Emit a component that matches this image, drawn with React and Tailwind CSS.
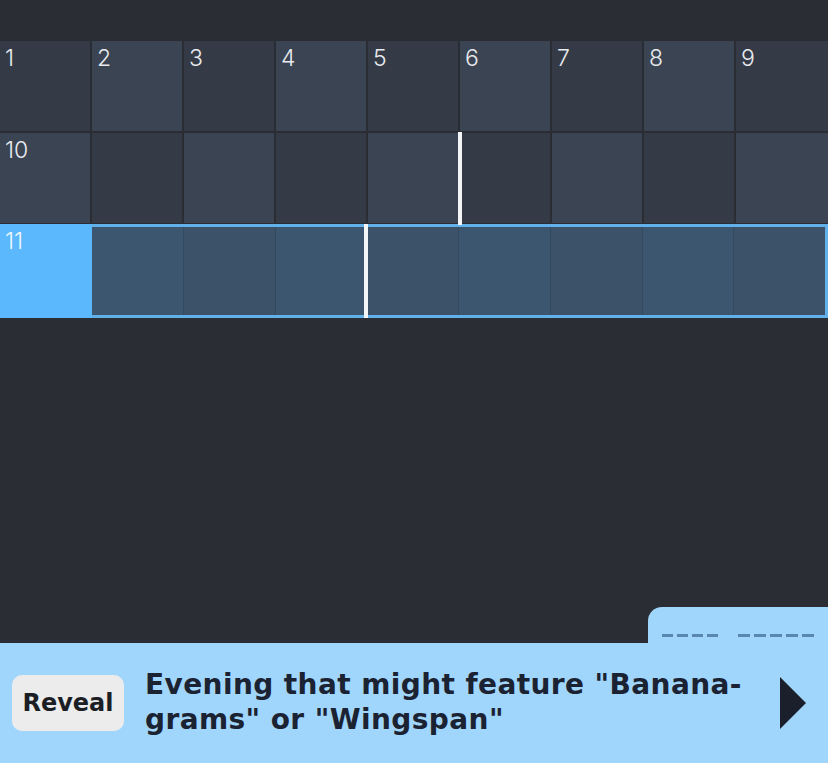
import React from 'react';

const dark = 'bg-[#343b47]';
const light = 'bg-[#3a4452]';

const Cell = ({ label, shade, cursor }) => (
  <div className={`relative h-[90px] ${shade}`}>
    {label && (
      <span className="absolute left-[5px] top-0 text-[23px] font-light text-[#e8eaee]">{label}</span>
    )}
    {cursor && <div className="absolute -left-[2px] -top-[1px] bottom-[-2px] w-[4px] bg-[#f4f5f7] z-10" />}
  </div>
);

const Dashes = ({ n, w }) => (
  <div className="flex gap-[4px]">
    {Array.from({ length: n }).map((_, i) => (
      <div key={i} className={`h-[3px] ${w} bg-[#5a87ad]`} />
    ))}
  </div>
);

export default function App() {
  const row1 = [1, 2, 3, 4, 5, 6, 7, 8, 9];
  return (
    <div className="h-screen w-full bg-[#2a2d33] flex flex-col overflow-hidden" style={{ fontFamily: 'Inter, "Noto Sans", sans-serif' }}>
      <div className="h-[41px]" />

      {/* row 1 */}
      <div className="grid grid-cols-[90px_90px_90px_90px_90px_90px_90px_90px_1fr] gap-x-[2px] mb-[2px]">
        {row1.map((n, i) => (
          <Cell key={n} label={n} shade={i % 2 === 0 ? dark : light} />
        ))}
      </div>

      {/* row 2 */}
      <div className="grid grid-cols-[90px_90px_90px_90px_90px_90px_90px_90px_1fr] gap-x-[2px]">
        {row1.map((n, i) => (
          <Cell key={n} label={i === 0 ? 10 : null} shade={i % 2 === 0 ? light : dark} cursor={i === 5} />
        ))}
      </div>

      {/* row 3 - active */}
      <div className="flex h-[94px] mt-[1px]">
        <div className="w-[92px] bg-[#5cb8fc] relative">
          <span className="absolute left-[5px] top-0 text-[23px] font-light text-[#eef6fe]">11</span>
        </div>
        <div className="flex-1 border-[3px] border-l-0 border-[#62b0ea] flex gap-x-[1px] bg-[#33495f]">
          {[0, 1, 2, 3, 4, 5, 6, 7].map((i) => (
            <div key={i} className={`relative flex-1 ${i % 2 === 0 ? 'bg-[#3c566f]' : 'bg-[#3b5269]'}`}>
              {i === 3 && <div className="absolute -left-[3px] -top-[3px] bottom-[-3px] w-[4px] bg-[#f4f5f7] z-10" />}
            </div>
          ))}
        </div>
      </div>

      <div className="flex-1" />

      {/* enumeration tab */}
      <div className="flex justify-end">
        <div className="w-[180px] h-[36px] bg-[#a0d6fc] rounded-tl-[14px] flex items-end pl-[14px] gap-[20px] pb-[6px]">
          <Dashes n={4} w="w-[11px]" />
          <Dashes n={5} w="w-[12px]" />
        </div>
      </div>

      {/* clue bar */}
      <div className="h-[120px] bg-[#a0d6fc] flex items-center pl-[12px] pr-[22px]" style={{ fontFamily: '"DejaVu Sans", sans-serif' }}>
        <button className="w-[112px] h-[56px] rounded-[10px] bg-[#ececec] text-[24px] font-bold text-[#1b1e25] shrink-0">
          Reveal
        </button>
        <div className="ml-[21px] flex-1 text-[28px] leading-[35px] font-bold tracking-[0.4px] text-[#1b2232] pb-[2px]">
          Evening that might feature "Banana-<br />grams" or "Wingspan"
        </div>
        <svg width="26" height="52" viewBox="0 0 26 52" className="shrink-0">
          <path d="M0 0 L26 26 L0 52 Z" fill="#1a1f2b" />
        </svg>
      </div>
    </div>
  );
}
